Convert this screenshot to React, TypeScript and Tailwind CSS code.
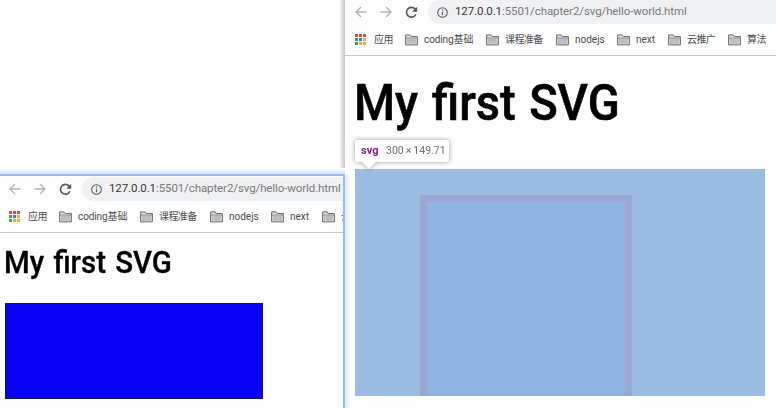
import type { ReactNode } from "react";

const UI = "font-['Roboto','Noto_Sans_CJK_SC',sans-serif]";

function Folder() {
  return (
    <svg className="block h-[12px] w-[13px] shrink-0" viewBox="0 0 13 12" fill="none">
      <path d="M.6 10.9V.9h4.5l1.3 1.6h6v8.4Z" fill="#dcdcdc" stroke="#6c6c6c" strokeLinejoin="round" />
      <path d="M2 5h9v4.6H2Z" fill="#bdbdbd" />
      <path d="M1 4.1h11" stroke="#777" strokeWidth=".8" />
    </svg>
  );
}

function AppsGrid() {
  const colors = ["#d84a42", "#d84a42", "#d84a42", "#35a165", "#397fd0", "#e5ae3e", "#35a165", "#e5ae3e", "#e5ae3e"];
  return (
    <div className="grid h-[11px] w-[11px] shrink-0 grid-cols-3 gap-[1px]">
      {colors.map((c, i) => (
        <i key={i} className="block h-[3px] w-[3px]" style={{ backgroundColor: c }} />
      ))}
    </div>
  );
}

function Arrow({ flip = false }: { flip?: boolean }) {
  return (
    <svg className={flip ? "h-3 w-3 shrink-0 rotate-180" : "h-3 w-3 shrink-0"} viewBox="0 0 12 12" fill="none" stroke="#b1b1b3" strokeWidth="1.3">
      <path d="M11.5 6H1M6 1 1 6l5 5" />
    </svg>
  );
}

function Label({ width, children }: { width: string; children: ReactNode }) {
  return <span className={`${width} shrink-0 whitespace-nowrap text-[#4c4c4e]`}>{children}</span>;
}

function Chrome() {
  return (
    <div className={`${UI} h-[56px] w-[440px] border-b border-[#c9c9c9] bg-[#fdfdfd]`}>
      <div className="flex h-6 items-center pl-[10px]">
        <Arrow />
        <div className="ml-[13px] flex"><Arrow flip /></div>
        <svg className="ml-[13px] h-[13px] w-[13px] shrink-0" viewBox="0 0 13 13" fill="none">
          <path d="M10.9 8.2a4.9 4.9 0 1 1-.9-5.3L11 4.2" stroke="#555659" strokeWidth="1.6" />
          <path d="M12.2.8v5H7.2Z" fill="#555659" />
        </svg>
        <div className="ml-[10px] flex h-6 w-[370px] items-center rounded-l-full bg-[#f0f1f3] pl-[9px]">
          <svg className="h-[11px] w-[11px] shrink-0" viewBox="0 0 11 11" fill="none" stroke="#5c5d60">
            <circle cx="5.5" cy="5.5" r="4.8" strokeWidth="1.1" />
            <path d="M5.5 4.7v3.5M5.5 2.5v1.2" strokeWidth="1.2" />
          </svg>
          <span className="ml-[7px] whitespace-nowrap text-[11.5px] tracking-[-0.1px] text-[#77787b]">
            <span className="text-[#333436]">127.0.0.1</span>:5501/chapter2/svg/hello-world.html
          </span>
        </div>
      </div>
      <div className="flex h-[31px] items-center pl-[10px] text-[10px]">
        <AppsGrid />
        <div className="ml-[8px] flex"><Label width="w-[31px]"><span className="tracking-[-0.4px]">应用</span></Label></div>
        <Folder />
        <div className="ml-[6px] flex"><Label width="w-[62px]"><span className="tracking-[-0.1px]">coding基础</span></Label></div>
        <Folder />
        <div className="ml-[6px] flex"><Label width="w-[51px]"><span className="tracking-[-0.6px]">课程准备</span></Label></div>
        <Folder />
        <div className="ml-[6px] flex"><Label width="w-[42px]">nodejs</Label></div>
        <Folder />
        <div className="ml-[6px] flex"><Label width="w-[32px]">next</Label></div>
        <Folder />
        <div className="ml-[6px] flex"><Label width="w-[41px]"><span className="tracking-[-0.6px]">云推广</span></Label></div>
        <Folder />
        <div className="ml-[6px] flex"><Label width="w-[20px]"><span className="tracking-[-0.5px]">算法</span></Label></div>
      </div>
    </div>
  );
}

export default function App() {
  return (
    <main className="relative h-[408px] w-[776px] overflow-hidden bg-white">
      <section className="absolute left-[345px] top-0 h-[408px] w-[431px] overflow-hidden bg-[#fefefe]">
        <Chrome />
        <div className="h-[113px] pl-[9px] pt-[17px]">
          <h1 className="origin-left scale-x-[0.94] whitespace-nowrap font-['Roboto',sans-serif] text-[50px] font-medium leading-[60px] text-black [-webkit-text-stroke:0.6px_black] [word-spacing:2px]">My first SVG</h1>
        </div>
        <div className="ml-[10px] h-[227px] w-[410px] overflow-hidden bg-[#9bbde1] pl-[65px] pt-[26px]">
          <div className="h-[220px] w-[212px] border-[7px] border-[#9ba7d2] bg-[#90b3e1]" />
        </div>
        <div className="absolute left-[10px] top-[140px] flex h-[22px] w-[94px] items-center rounded-[2px] bg-white pl-[6px] font-['Roboto',sans-serif] text-[11px] drop-shadow-[0_0_2.5px_rgba(0,0,0,0.4)]">
          <b className="w-[25px] text-[#882080]">svg</b>
          <span className="whitespace-nowrap text-[10.5px] text-[#717171]">300<span className="px-[2px]">×</span>149.71</span>
          <svg className="absolute left-[7px] top-[22px] h-[7px] w-[14px]" viewBox="0 0 14 7"><path d="M0 0h14L7 7Z" fill="white" /></svg>
        </div>
      </section>
      <div className="absolute left-[339px] top-0 h-[174px] w-[6px] bg-linear-to-r from-white to-[#c8c8c8]" />
      <div className="absolute left-[345px] top-[175px] h-[233px] w-[6px] bg-linear-to-r from-[#dceaff] to-[#fefefe]" />
      <div className="absolute left-0 top-[168px] h-[6px] w-[345px] bg-linear-to-b from-white to-[#d1e5fc]" />
      <section className="absolute left-0 top-[174px] h-[234px] w-[345px] overflow-hidden border-r-2 border-t-2 border-[#99bde9] bg-[#fefefe]">
        <div className="-ml-px pt-px"><Chrome /></div>
        <div className="h-[70px] pl-[4px] pt-[10px]">
          <h1 className="origin-left scale-x-[0.95] whitespace-nowrap font-['Roboto',sans-serif] text-[31px] font-medium leading-[40px] text-black [-webkit-text-stroke:0.3px_black] [word-spacing:2px]">My first SVG</h1>
        </div>
        <div className="ml-[5px] h-[96px] w-[258px] border border-[#171752] bg-[#0900f1]" />
      </section>
    </main>
  );
}
